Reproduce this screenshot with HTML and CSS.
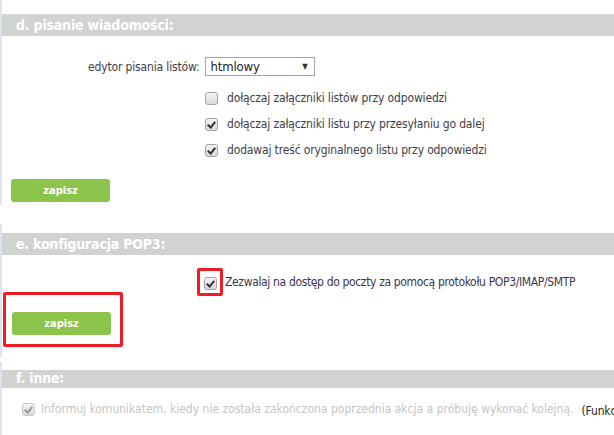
FILE: index.html
```
<!DOCTYPE html>
<html lang="pl">
<head>
    <meta charset="UTF-8">
    <title>Ustawienia poczty</title>
    <link rel="stylesheet" href="styles.css">
</head>
<body>
    <div class="section section-d">
        <h2 class="section-title">d. pisanie wiadomości:</h2>
        <div class="field-row">
            <label class="field-label">edytor pisania listów:</label>
            <div class="select-box">
                <span>htmlowy</span>
                <span class="select-arrow">▼</span>
            </div>
        </div>
        <div class="check-list">
            <label class="check-row"><span class="checkbox"></span>dołączaj załączniki listów przy odpowiedzi</label>
            <label class="check-row"><span class="checkbox checked"></span>dołączaj załączniki listu przy przesyłaniu go dalej</label>
            <label class="check-row"><span class="checkbox checked"></span>dodawaj treść oryginalnego listu przy odpowiedzi</label>
        </div>
        <button class="save-btn">zapisz</button>
    </div>

    <div class="section section-e">
        <h2 class="section-title">e. konfiguracja POP3:</h2>
        <div class="check-list pop-row">
            <label class="check-row dark">
                <span class="highlight"><span class="checkbox checked"></span></span>Zezwalaj na dostęp do poczty za pomocą protokołu POP3/IMAP/SMTP
            </label>
        </div>
        <div class="btn-highlight">
            <button class="save-btn">zapisz</button>
        </div>
    </div>

    <div class="section section-f">
        <h2 class="section-title short">f. inne:</h2>
        <div class="other-row">
            <label class="check-row disabled"><span class="checkbox checked"></span>Informuj komunikatem, kiedy nie została zakończona poprzednia akcja a próbuję wykonać kolejną.</label>
            <span class="note">(Funkcja</span>
        </div>
    </div>
</body>
</html>
```

FILE: styles.css
```
body {
    margin: 0;
    font-family: Tahoma, "DejaVu Sans Condensed", "DejaVu Sans", sans-serif;
    font-size: 12px;
    letter-spacing: -0.15px;
    color: #3d3d4a;
    background: #fff;
    overflow: hidden;
    white-space: nowrap;
}

.section {
    border-left: 2px solid #dce4ee;
}

.section-d {
    padding-top: 14px;
    height: 191px;
}

.section-e {
    margin-top: 19px;
    padding-top: 9px;
    height: 124px;
}

.section-f {
    margin-top: 5px;
    padding-top: 8px;
    height: 70px;
}

.section-title {
    margin: 0;
    height: 22px;
    line-height: 22px;
    padding-left: 14px;
    background: #d1d3d2;
    color: #fff;
    font-size: 14px;
    font-weight: bold;
    letter-spacing: -0.2px;
}

.section-title.short {
    height: 18px;
    line-height: 16px;
}

.field-row {
    display: flex;
    align-items: center;
    margin-top: 21px;
    padding-left: 86px;
}

.field-label {
    margin-right: 5px;
}

.select-box {
    display: flex;
    justify-content: space-between;
    align-items: center;
    width: 97px;
    height: 17px;
    padding: 0 6px 0 5px;
    border: 1px solid #a6a6a6;
    color: #222;
    font-size: 13px;
}

.select-arrow {
    font-size: 8px;
    color: #333;
}

.check-list {
    display: flex;
    flex-direction: column;
    gap: 10px;
    margin-top: 14px;
    padding-left: 203px;
}

.check-row {
    display: flex;
    align-items: center;
    height: 16px;
}

.checkbox {
    position: relative;
    width: 11px;
    height: 11px;
    margin-right: 9px;
    border: 1px solid #a3a3a3;
    border-radius: 3px;
    background: linear-gradient(#f4f4f4, #d9d9d9);
}

.checkbox.checked::after {
    content: "";
    position: absolute;
    left: 3px;
    top: 1px;
    width: 3px;
    height: 6px;
    border: solid #333;
    border-width: 0 2px 2px 0;
    transform: rotate(40deg);
}

.save-btn {
    display: block;
    width: 99px;
    height: 23px;
    margin: 21px 0 0 9px;
    border: none;
    border-radius: 3px;
    background: #8cc34b;
    color: #fff;
    font-family: inherit;
    font-size: 11px;
    font-weight: bold;
}

.pop-row {
    margin-top: 13px;
    padding-left: 195px;
}

.check-row.dark {
    color: #3a3650;
    height: 28px;
    letter-spacing: -0.35px;
}

.highlight {
    display: flex;
    align-items: flex-end;
    justify-content: center;
    width: 26px;
    height: 28px;
    margin-right: 2px;
    padding-bottom: 3px;
    border: 3px solid #ee1c25;
    border-radius: 2px;
    box-sizing: border-box;
}

.highlight .checkbox {
    margin-right: 0;
}

.btn-highlight {
    width: 114px;
    height: 49px;
    margin: -4px 0 0 1px;
    border: 3px solid #ee1c25;
    border-radius: 2px;
}

.btn-highlight .save-btn {
    margin: 17px 0 0 6px;
}

.other-row {
    display: flex;
    align-items: center;
    gap: 8px;
    margin-top: 12px;
    padding-left: 20px;
}

.check-row.disabled {
    color: #c4c4c4;
    letter-spacing: 0;
}

.check-row.disabled .checkbox {
    border-color: #c8c8c8;
    margin-right: 6px;
}

.check-row.disabled .checkbox::after {
    border-color: #999;
}

.note {
    margin-top: 4px;
    color: #222;
}
```
